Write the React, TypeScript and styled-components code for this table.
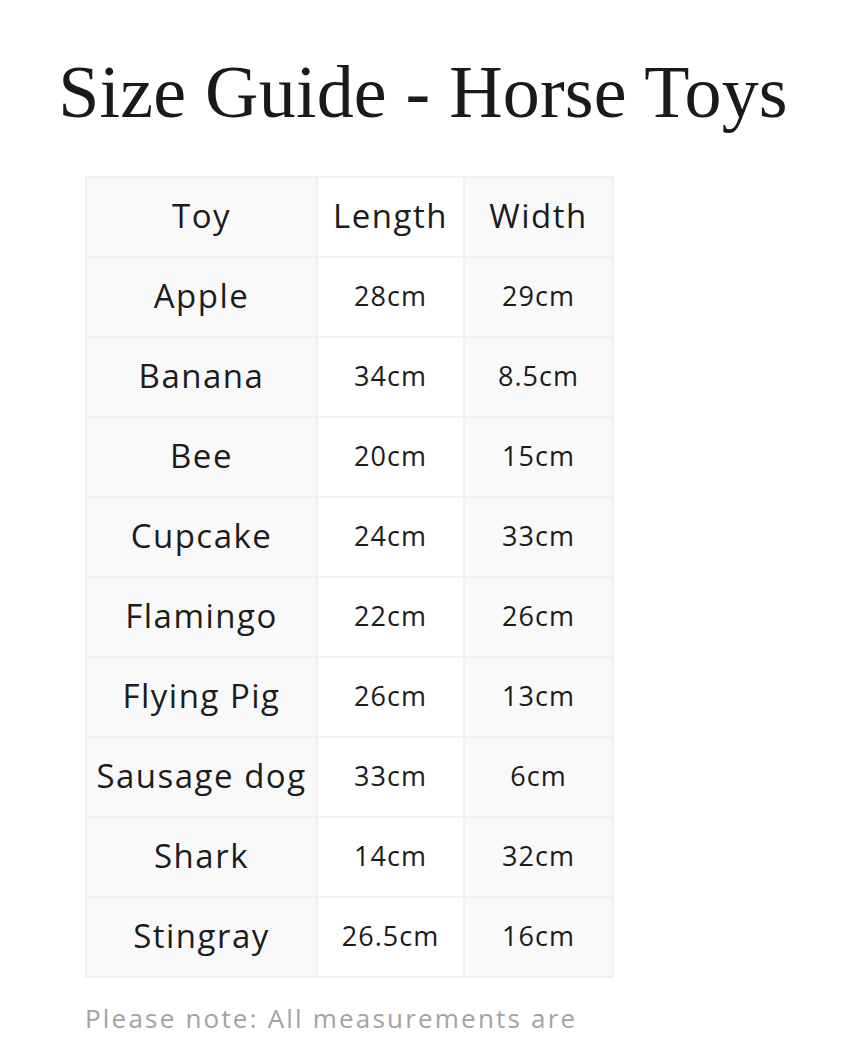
import React from 'react';
import styled, { createGlobalStyle } from 'styled-components';

const GlobalStyle = createGlobalStyle`
  body {
    margin: 0;
    background: #fff;
    font-family: "Open Sans", "Noto Sans", sans-serif;
    color: #1f1f1f;
  }
`;

const Page = styled.div`
  width: 846px;
  padding-top: 55px;
`;

const Title = styled.h1`
  margin: 0;
  font-family: "Liberation Serif", "Times New Roman", serif;
  font-weight: 400;
  font-size: 74px;
  line-height: 1;
  text-align: center;
  white-space: nowrap;
  letter-spacing: 0.2px;
  color: #1a1a1a;
`;

const Content = styled.div`
  padding: 0 85px;
`;

const Table = styled.table`
  margin-top: 47px;
  border-collapse: collapse;
  table-layout: fixed;
  width: 527px;
`;

const Cell = styled.td<{ $shade: boolean; $big?: boolean }>`
  height: 74px;
  padding: 0 0 4px;
  border: 2px solid #f1f1f1;
  background: ${p => (p.$shade ? '#f9f9f9' : '#fff')};
  text-align: center;
  vertical-align: middle;
  font-size: ${p => (p.$big ? '33px' : '27px')};
  letter-spacing: ${p => (p.$big ? '1.5px' : '1px')};
  color: #1c1c1c;
  white-space: nowrap;
`;

const Note = styled.p`
  margin: 21px 0 0;
  font-size: 26px;
  line-height: 1.5;
  letter-spacing: 2.2px;
  color: #a3a3a3;
`;

const rows: [string, string, string][] = [
  ['Apple', '28cm', '29cm'],
  ['Banana', '34cm', '8.5cm'],
  ['Bee', '20cm', '15cm'],
  ['Cupcake', '24cm', '33cm'],
  ['Flamingo', '22cm', '26cm'],
  ['Flying Pig', '26cm', '13cm'],
  ['Sausage dog', '33cm', '6cm'],
  ['Shark', '14cm', '32cm'],
  ['Stingray', '26.5cm', '16cm'],
];

const App: React.FC = () => {
  return (
    <Page>
      <GlobalStyle />
      <Title>Size Guide - Horse Toys</Title>
      <Content>
        <Table>
          <colgroup>
            <col style={{ width: 231 }} />
            <col style={{ width: 147 }} />
            <col style={{ width: 149 }} />
          </colgroup>
          <tbody>
            <tr>
              <Cell $shade $big>Toy</Cell>
              <Cell $shade={false} $big>Length</Cell>
              <Cell $shade $big>Width</Cell>
            </tr>
            {rows.map(([toy, length, width]) => (
              <tr key={toy}>
                <Cell $shade $big>{toy}</Cell>
                <Cell $shade={false}>{length}</Cell>
                <Cell $shade>{width}</Cell>
              </tr>
            ))}
          </tbody>
        </Table>
        <Note>Please note: All measurements are</Note>
      </Content>
    </Page>
  );
};

export default App;
